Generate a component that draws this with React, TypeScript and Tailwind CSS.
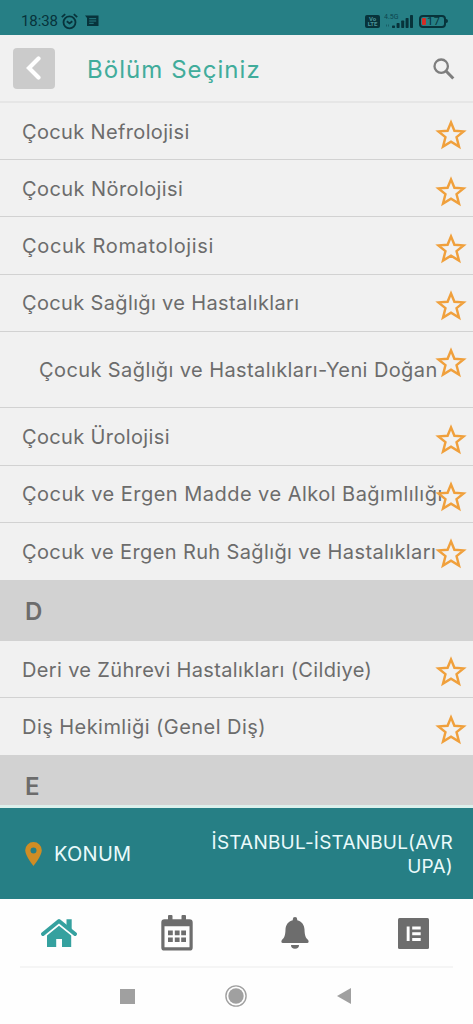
import { clsx } from "clsx";

interface Department {
    name: string;
    tracking: string;
    tall?: boolean;
}

interface Section {
    letter?: string;
    items: Department[];
}

const sections: Section[] = [
    {
        items: [
            { name: "Çocuk Nefrolojisi", tracking: "tracking-[0.35px]" },
            { name: "Çocuk Nörolojisi", tracking: "tracking-[0.42px]" },
            { name: "Çocuk Romatolojisi", tracking: "tracking-[0.67px]" },
            { name: "Çocuk Sağlığı ve Hastalıkları", tracking: "tracking-[0.35px]" },
            { name: "Çocuk Sağlığı ve Hastalıkları-Yeni Doğan", tracking: "tracking-[0.4px]", tall: true },
            { name: "Çocuk Ürolojisi", tracking: "tracking-[0.36px]" },
            { name: "Çocuk ve Ergen Madde ve Alkol Bağımlılığı", tracking: "tracking-[0.47px]" },
            { name: "Çocuk ve Ergen Ruh Sağlığı ve Hastalıkları", tracking: "tracking-[0.38px]" },
        ],
    },
    {
        letter: "D",
        items: [
            { name: "Deri ve Zührevi Hastalıkları (Cildiye)", tracking: "tracking-[0.35px]" },
            { name: "Diş Hekimliği (Genel Diş)", tracking: "tracking-[0.45px]" },
        ],
    },
    { letter: "E", items: [] },
];

function StatusBar() {
    return (
        <div className="flex h-[35px] shrink-0 items-start justify-between bg-[#267f85] pt-[13px] pr-[27px] pl-[21px] text-[#07333b]">
            <div className="flex h-4 items-center">
                <span className="w-[37px] font-[Roboto] text-[15px] leading-4 tracking-[-0.1px]">18:38</span>
                <svg className="ml-[3px] h-[17px] w-[17px]" viewBox="0 0 17 17" fill="none" stroke="currentColor" strokeWidth="1.8">
                    <circle cx="8.5" cy="9.3" r="6" />
                    <path d="M0.8 4.2 4.2 1.2M16.2 4.2 12.8 1.2M5.8 8.2l2.7 2.2 2.8-2.2" />
                </svg>
                <svg className="ml-[7px] h-3 w-[14px]" viewBox="0 0 14 12">
                    <path d="M0 0.5h13.5V11H2V3z" fill="currentColor" />
                    <path d="M4.2 3.7h7M4.2 6h7M4.2 8.3h4.5" stroke="#267f85" strokeWidth="1" />
                </svg>
            </div>
            <div className="flex h-4 items-center">
                <div className="mr-1 flex h-[13px] w-[15px] flex-col items-center justify-center rounded-[2px] bg-[#07333b] font-[Roboto] text-[6px] leading-[5.5px] font-bold text-[#4a9499]">
                    <span>Vo</span>
                    <span>LTE</span>
                </div>
                <div className="relative h-[15px] w-[30px]">
                    <span className="absolute top-0 left-0 font-[Roboto] text-[7px] leading-[6px] text-[#0d4650]">4.5G</span>
                    <svg className="absolute inset-0 h-[15px] w-[30px]" viewBox="0 0 30 15" fill="currentColor">
                        <path d="M2 10.5h1v2H2zM4 10.5h1v2H4z" opacity=".4" />
                        <rect x="8" y="11.5" width="3" height="2.5" rx=".7" />
                        <rect x="12.6" y="9" width="3" height="5" rx=".7" />
                        <rect x="17.2" y="6.5" width="3" height="7.5" rx=".7" />
                        <rect x="21.6" y="4" width="3" height="10" rx=".7" />
                        <rect x="26" y="1" width="3" height="13" rx=".7" />
                    </svg>
                </div>
                <div className="relative ml-[5px] flex h-[13px] w-[27px] items-center rounded-[4px] border-2 border-current pl-px">
                    <span className="h-[7px] w-1 shrink-0 rounded-[1px] bg-[#d22d25]" />
                    <span className="ml-px font-[Roboto] text-[11px] leading-[9px] tracking-[0.5px]">17</span>
                    <span className="absolute top-[2.5px] -right-[4px] h-1 w-[2px] rounded-r bg-current" />
                </div>
            </div>
        </div>
    );
}

function Header() {
    return (
        <header className="flex h-[68px] shrink-0 items-center border-b-2 border-[#e6e6e6] bg-[#f1f1f1] pr-[18px] pl-[13px]">
            <button type="button" aria-label="Geri" className="flex h-[41px] w-[42px] items-center justify-center rounded-[4px] bg-[#cbcbcb]">
                <svg className="h-6 w-4" viewBox="0 0 16 24" fill="none" stroke="#fff" strokeWidth="4.2">
                    <path d="M12.5 2.5 3 12l9.5 9.5" strokeLinecap="round" />
                </svg>
            </button>
            <h1 className="mt-[3px] ml-8 text-[24px] leading-8 tracking-[1.05px] whitespace-nowrap text-[#41ac9b]">Bölüm Seçiniz</h1>
            <svg className="mt-px ml-auto h-[22px] w-[22px]" viewBox="0 0 22 22" fill="none" stroke="#7e7e7e">
                <circle cx="8.2" cy="8.2" r="6.7" strokeWidth="2.3" />
                <path d="m13 13 7.3 7.5" strokeWidth="3" />
            </svg>
        </header>
    );
}

function Star() {
    return (
        <svg className="absolute top-[15.5px] right-[6px] h-[31px] w-[32px]" viewBox="0 0 30 30" preserveAspectRatio="none" fill="none" stroke="#f0a03c" strokeWidth="2.3">
            <path d="M15 3.3 18.2 11.4 26.8 12 20.2 17.6 22.5 26.7 15 21.9 7.5 26.7 9.8 17.6 3.2 12 11.8 11.4z" />
        </svg>
    );
}

function DepartmentRow({ name, tracking, tall }: Department) {
    return (
        <li
            className={clsx(
                "relative flex items-center border-b border-[#d2d2d2] bg-[#f1f1f1] pt-px last:border-b-0",
                tall ? "h-[76.6px] pl-[39px]" : "h-[57.2px] pl-[22px]",
            )}
        >
            <span className={clsx("text-[20px] leading-6 whitespace-nowrap", tracking)}>{name}</span>
            <Star />
        </li>
    );
}

function LocationBar() {
    return (
        <div className="flex h-[94px] shrink-0 items-center border-t-[3px] border-[#dcefeb] bg-[#267f85] pr-5 pl-[25px] text-[19px] text-[#eafafb]">
            <svg className="h-6 w-[17px]" viewBox="0 0 17 24">
                <path fillRule="evenodd" fill="#cf8d24" d="M8.5 0A8.3 8.3 0 0 0 .2 8.3C.2 14 8.5 24 8.5 24s8.3-10 8.3-15.7A8.3 8.3 0 0 0 8.5 0zm0 5.4a3 3 0 1 1 0 6 3 3 0 0 1 0-6z" />
            </svg>
            <span className="mt-px ml-[12px] text-[20px] tracking-[0.25px]">KONUM</span>
            <p className="mt-0.5 ml-auto text-right leading-6 tracking-[0.2px]">
                İSTANBUL-İSTANBUL(AVR
                <br />
                UPA)
            </p>
        </div>
    );
}

function TabBar() {
    return (
        <nav className="mx-5 flex h-[69px] shrink-0 items-center border-b-2 border-[#f5f5f5] pl-[21px] text-[#6d6d6d]">
            <svg className="h-[30px] w-9" viewBox="0 0 36 30" fill="#35a19f">
                <path d="M6 17.4 18 7.7l12.2 9.7V29H21v-8h-5.8v8H6z" />
                <path d="M2 16 18 3l16 13" fill="none" stroke="#fefefe" strokeWidth="6" />
                <path d="M25.5 1.2h5.2v11l-5.2-4.2z" />
                <path d="M2 16 18 3l16 13" fill="none" stroke="#35a19f" strokeWidth="3.9" strokeLinecap="round" strokeLinejoin="round" />
            </svg>
            <svg className="ml-[84px] h-9 w-8" viewBox="0 0 32 36" fill="currentColor">
                <rect x="7" y="0" width="4.5" height="8" rx="1" />
                <rect x="20.5" y="0" width="4.5" height="8" rx="1" />
                <path fillRule="evenodd" d="M3.5 4.2h25a3.2 3.2 0 0 1 3.2 3.2v25a3.2 3.2 0 0 1-3.2 3.2h-25a3.2 3.2 0 0 1-3.2-3.2v-25a3.2 3.2 0 0 1 3.2-3.2zm0 7.1v21h25v-21z" />
                <path d="M7 15.6h4.8v4.6H7zM13.8 15.6h4.8v4.6h-4.8zM20.2 15.6H25v4.6h-4.8zM7 22.4h4.8V27H7zM13.8 22.4h4.8V27h-4.8zM20.2 22.4H25V27h-4.8z" />
            </svg>
            <svg className="ml-[88px] h-8 w-7" viewBox="0 0 28 32" fill="currentColor">
                <path d="M14 0a2.2 2.2 0 0 0-2.2 2.2v1C7.2 4.2 4.7 8 4.5 12.5c-.2 6-1 8-3.6 10.5C0 24 .2 26 1.8 26h24.4c1.6 0 1.8-2 .9-3-2.6-2.5-3.4-4.5-3.6-10.5-.2-4.5-2.7-8.3-7.3-9.3v-1A2.2 2.2 0 0 0 14 0zM10 28h8a4 3.8 0 0 1-8 0z" />
            </svg>
            <svg className="mt-px ml-[89px] h-[31px] w-[31px]" viewBox="0 0 31 31">
                <rect width="31" height="31" rx="1.5" fill="currentColor" />
                <path d="M8.7 8.5h2.9V23H8.7zM14.2 8.5h8.5v2.9h-8.5zM14.2 14.3h8.5v2.9h-8.5zM14.2 20.1h8.5V23h-8.5z" fill="#fff" />
            </svg>
        </nav>
    );
}

function SystemNav() {
    return (
        <div className="flex h-14 shrink-0 items-center justify-between pr-[122px] pl-[120px] text-[#a0a0a0]">
            <span className="h-[15px] w-[15px] bg-current" />
            <svg className="h-[22px] w-[22px]" viewBox="0 0 22 22">
                <circle cx="11" cy="11" r="10.1" fill="none" stroke="currentColor" strokeWidth="1.4" />
                <circle cx="11" cy="11" r="7.7" fill="currentColor" />
            </svg>
            <svg className="h-4 w-[14px]" viewBox="0 0 14 16" fill="currentColor">
                <path d="M14 0v16L0 8z" />
            </svg>
        </div>
    );
}

export default function App() {
    return (
        <div className="flex h-[1024px] w-[473px] flex-col overflow-hidden bg-[#fefefe] font-[Inter,sans-serif] text-[#6c6c6c]">
            <StatusBar />
            <Header />
            <main className="min-h-0 flex-1 overflow-hidden bg-[#d2d2d2]">
                {sections.map((section, i) => (
                    <section key={i}>
                        {section.letter && (
                            <h2 className="flex h-[61px] items-center bg-[#d2d2d2] pt-[3px] pl-[25px] text-[24px] leading-8 font-semibold">
                                {section.letter}
                            </h2>
                        )}
                        <ul>
                            {section.items.map((item) => (
                                <DepartmentRow key={item.name} {...item} />
                            ))}
                        </ul>
                    </section>
                ))}
            </main>
            <LocationBar />
            <TabBar />
            <SystemNav />
        </div>
    );
}
